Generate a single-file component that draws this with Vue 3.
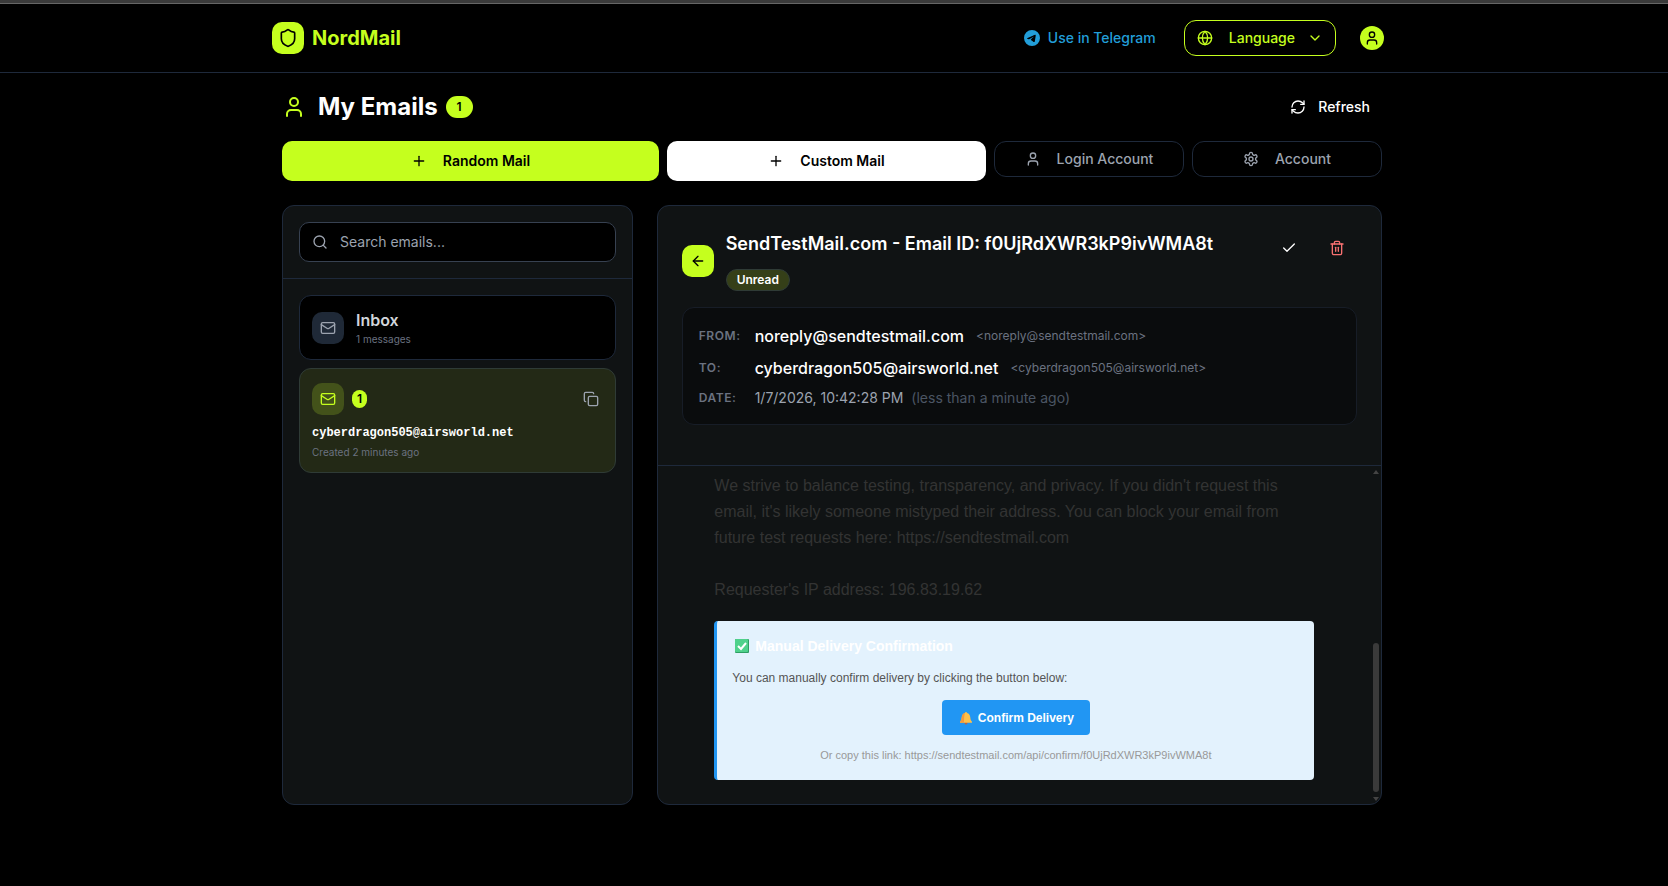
<template>
  <div class="page">
    <header class="topbar">
      <div class="topbar_inner">
        <a href="#" class="brand">
          <span class="brand_mark"><Icon name="shield" :size="20" /></span>
          <span class="brand_name">NordMail</span>
        </a>
        <nav class="topbar_nav">
          <a href="#" class="telegram">
            <svg width="16" height="16" viewBox="0 0 24 24" fill="currentColor" aria-hidden="true">
              <path d="M11.944 0A12 12 0 0 0 0 12a12 12 0 0 0 12 12 12 12 0 0 0 12-12A12 12 0 0 0 12 0a12 12 0 0 0-.056 0zm4.962 7.224c.1-.002.321.023.465.14a.506.506 0 0 1 .171.325c.016.093.036.306.02.472-.18 1.898-.962 6.502-1.36 8.627-.168.9-.499 1.201-.82 1.23-.696.065-1.225-.46-1.9-.902-1.056-.693-1.653-1.124-2.678-1.8-1.185-.78-.417-1.21.258-1.91.177-.184 3.247-2.977 3.307-3.23.007-.032.014-.15-.056-.212s-.174-.041-.249-.024c-.106.024-1.793 1.14-5.061 3.345-.48.33-.913.49-1.302.48-.428-.008-1.252-.241-1.865-.44-.752-.245-1.349-.374-1.297-.789.027-.216.325-.437.893-.663 3.498-1.524 5.83-2.529 6.998-3.014 3.332-1.386 4.025-1.627 4.476-1.635z" />
            </svg>
            Use in Telegram
          </a>
          <button type="button" class="language">
            <Icon name="globe" />
            <span class="language_label">Language</span>
            <Icon name="chevron" />
          </button>
          <button type="button" class="avatar_btn" aria-label="Profile">
            <span class="avatar"><Icon name="user" /></span>
          </button>
        </nav>
      </div>
    </header>

    <main class="content">
      <div class="title_row">
        <Icon name="user" :size="24" class="title_icon" />
        <h1>My Emails</h1>
        <span class="count">{{ accounts.length }}</span>
        <button type="button" class="refresh"><Icon name="refresh" />Refresh</button>
      </div>

      <div class="actions">
        <button
          v-for="action in actions"
          :key="action.label"
          type="button"
          class="action"
          :class="action.kind"
        >
          <Icon :name="action.icon" />{{ action.label }}
        </button>
      </div>

      <div class="panels">
        <section class="panel sidebar">
          <div class="search_wrapper">
            <label class="search">
              <Icon name="search" />
              <input v-model="query" type="text" placeholder="Search emails..." aria-label="Search emails">
            </label>
          </div>
          <div class="mailboxes">
            <a href="#" class="box inbox">
              <span class="box_icon"><Icon name="mail" /></span>
              <span class="inbox_text">
                <span class="inbox_title">Inbox</span>
                <span class="small">{{ messageCount }} messages</span>
              </span>
            </a>
            <div v-for="account in accounts" :key="account.address" class="box account">
              <div class="account_top">
                <span class="box_icon"><Icon name="mail" /></span>
                <span class="unread_count">{{ account.unread }}</span>
                <button type="button" class="copy" aria-label="Copy address"><Icon name="copy" /></button>
              </div>
              <div class="address">{{ account.address }}</div>
              <div class="small">{{ account.created }}</div>
            </div>
          </div>
        </section>

        <section class="panel reader">
          <div class="reader_head">
            <div class="subject_row">
              <button type="button" class="back" aria-label="Back"><Icon name="arrow" /></button>
              <div class="subject">
                <h2>{{ mail.subject }}</h2>
                <span class="status">Unread</span>
              </div>
              <div class="tools">
                <button type="button" class="tool" aria-label="Mark as read"><Icon name="check" /></button>
                <button type="button" class="tool danger" aria-label="Delete"><Icon name="trash" /></button>
              </div>
            </div>
            <dl class="meta">
              <div class="meta_row">
                <dt>From:</dt>
                <dd>{{ mail.from }}<span class="raw">&lt;{{ mail.from }}&gt;</span></dd>
              </div>
              <div class="meta_row">
                <dt>To:</dt>
                <dd>{{ mail.to }}<span class="raw">&lt;{{ mail.to }}&gt;</span></dd>
              </div>
              <div class="meta_row">
                <dt>Date:</dt>
                <dd class="date">{{ mail.date }}<span class="ago">({{ mail.ago }})</span></dd>
              </div>
            </dl>
          </div>

          <div class="reader_body">
            <div class="scroll_area">
              <article class="letter">
                <p class="letter_text">We strive to balance testing, transparency, and privacy. If you didn't request this email, it's likely someone mistyped their address. You can block your email from future test requests here: https://sendtestmail.com<br><br>Requester's IP address: 196.83.19.62</p>
                <div class="confirm">
                  <h3>
                    <svg width="20" height="16" viewBox="0 0 20 16" aria-hidden="true">
                      <rect x="3" y="1" width="14" height="14" rx="1" fill="#2f9e63" />
                      <rect x="3" y="1" width="13" height="13" rx="1" fill="#4fd18b" />
                      <path d="M6 8l3 3 5-6" fill="none" stroke="#fff" stroke-width="2" />
                    </svg>
                    Manual Delivery Confirmation
                  </h3>
                  <p>You can manually confirm delivery by clicking the button below:</p>
                  <button type="button" class="confirm_btn">
                    <svg width="16" height="14" viewBox="0 0 16 14" aria-hidden="true">
                      <circle cx="8" cy="12" r="1.5" fill="#b5634a" />
                      <path d="M8 1a1 1 0 0 1 1 1c2 .5 3 2 3.300 4.500.2 2 .5 3 1.700 4.200v1H2v-1c1.200-1.200 1.500-2.200 1.700-4.200C4 4 5 2.500 7 2a1 1 0 0 1 1-1z" fill="#ffc04a" />
                      <path d="M7 2C5 2.500 4 4 3.700 6.500c-.2 2-.5 3-1.700 4.200v1h4C6 8 6 5 7 2z" fill="#f59a3c" />
                    </svg>
                    Confirm Delivery
                  </button>
                  <p class="copy_link">Or copy this link: https://sendtestmail.com/api/confirm/f0UjRdXWR3kP9ivWMA8t</p>
                </div>
              </article>
            </div>
            <div class="scrollbar" aria-hidden="true">
              <span class="scroll_up"></span>
              <span class="scroll_thumb"></span>
              <span class="scroll_down"></span>
            </div>
          </div>
        </section>
      </div>
    </main>
  </div>
</template>

<script setup>
import { ref, computed, h } from 'vue';

const icons = {
  shield: ['M20 13c0 5-3.5 7.5-7.66 8.95a1 1 0 0 1-.67-.01C7.5 20.5 4 18 4 13V6a1 1 0 0 1 1-1c2 0 4.5-1.2 6.24-2.72a1.17 1.17 0 0 1 1.52 0C14.51 3.81 17 5 19 5a1 1 0 0 1 1 1z'],
  globe: ['M22 12a10 10 0 1 1-20 0 10 10 0 0 1 20 0z', 'M12 2a14.5 14.5 0 0 0 0 20 14.5 14.5 0 0 0 0-20', 'M2 12h20'],
  chevron: ['m6 9 6 6 6-6'],
  user: ['M19 21v-2a4 4 0 0 0-4-4H9a4 4 0 0 0-4 4v2', 'M16 7a4 4 0 1 1-8 0 4 4 0 0 1 8 0z'],
  refresh: ['M3 12a9 9 0 0 1 9-9 9.75 9.75 0 0 1 6.74 2.74L21 8', 'M21 3v5h-5', 'M21 12a9 9 0 0 1-9 9 9.75 9.75 0 0 1-6.74-2.74L3 16', 'M8 16H3v5'],
  plus: ['M5 12h14', 'M12 5v14'],
  settings: [
    'M12.22 2h-.44a2 2 0 0 0-2 2v.18a2 2 0 0 1-1 1.73l-.43.25a2 2 0 0 1-2 0l-.15-.08a2 2 0 0 0-2.73.73l-.22.38a2 2 0 0 0 .73 2.73l.15.1a2 2 0 0 1 1 1.72v.51a2 2 0 0 1-1 1.74l-.15.09a2 2 0 0 0-.73 2.73l.22.38a2 2 0 0 0 2.73.73l.15-.08a2 2 0 0 1 2 0l.43.25a2 2 0 0 1 1 1.73V20a2 2 0 0 0 2 2h.44a2 2 0 0 0 2-2v-.18a2 2 0 0 1 1-1.73l.43-.25a2 2 0 0 1 2 0l.15.08a2 2 0 0 0 2.73-.73l.22-.39a2 2 0 0 0-.73-2.73l-.15-.08a2 2 0 0 1-1-1.74v-.5a2 2 0 0 1 1-1.74l.15-.09a2 2 0 0 0 .73-2.73l-.22-.38a2 2 0 0 0-2.73-.73l-.15.08a2 2 0 0 1-2 0l-.43-.25a2 2 0 0 1-1-1.73V4a2 2 0 0 0-2-2z',
    'M15 12a3 3 0 1 1-6 0 3 3 0 0 1 6 0z'
  ],
  search: ['M19 11a8 8 0 1 1-16 0 8 8 0 0 1 16 0z', 'm21 21-4.3-4.3'],
  mail: ['M4 4h16a2 2 0 0 1 2 2v12a2 2 0 0 1-2 2H4a2 2 0 0 1-2-2V6a2 2 0 0 1 2-2z', 'm22 7-8.97 5.7a1.94 1.94 0 0 1-2.06 0L2 7'],
  copy: ['M10 8h10a2 2 0 0 1 2 2v10a2 2 0 0 1-2 2H10a2 2 0 0 1-2-2V10a2 2 0 0 1 2-2z', 'M4 16c-1.1 0-2-.9-2-2V4c0-1.1.9-2 2-2h10c1.1 0 2 .9 2 2'],
  arrow: ['m12 19-7-7 7-7', 'M19 12H5'],
  check: ['M20 6 9 17l-5-5'],
  trash: ['M3 6h18', 'M19 6v14c0 1-1 2-2 2H7c-1 0-2-1-2-2V6', 'M8 6V4c0-1 1-2 2-2h4c1 0 2 1 2 2v2', 'M10 11v6', 'M14 11v6']
};

// Small line icon, takes the text color of its parent
const Icon = ({ name, size = 16 }) => h('svg', {
  width: size,
  height: size,
  viewBox: '0 0 24 24',
  fill: 'none',
  stroke: 'currentColor',
  'stroke-width': 2,
  'stroke-linecap': 'round',
  'stroke-linejoin': 'round',
  'aria-hidden': 'true'
}, icons[name].map((d) => h('path', { d })));
Icon.props = ['name', 'size'];

const query = ref('');

const actions = [
  { label: 'Random Mail', icon: 'plus', kind: 'primary' },
  { label: 'Custom Mail', icon: 'plus', kind: 'light' },
  { label: 'Login Account', icon: 'user', kind: 'outline' },
  { label: 'Account', icon: 'settings', kind: 'outline' }
];

const accounts = ref([
  { address: 'cyberdragon505@airsworld.net', unread: 1, created: 'Created 2 minutes ago' }
]);

const messageCount = computed(() => accounts.value.reduce((sum, a) => sum + a.unread, 0));

const mail = {
  subject: 'SendTestMail.com - Email ID: f0UjRdXWR3kP9ivWMA8t',
  from: 'noreply@sendtestmail.com',
  to: 'cyberdragon505@airsworld.net',
  date: '1/7/2026, 10:42:28 PM',
  ago: 'less than a minute ago'
};
</script>

<style>
body {
  margin: 0;
  background: #000;
}
</style>

<style scoped>
.page {
  --lime: #c5ff1e;
  --line: #1e293b;
  min-height: 100vh;
  box-sizing: border-box;
  border-top: 3px solid #3a3a3a;
  background: #000;
  color: #fff;
  font-family: Inter, "Liberation Sans", sans-serif;
  font-size: 14px;
  line-height: 20px;
}
.page * {
  box-sizing: border-box;
}
svg {
  flex-shrink: 0;
}
a {
  color: inherit;
  text-decoration: none;
}
button {
  display: flex;
  align-items: center;
  justify-content: center;
  padding: 0;
  border: none;
  background: none;
  color: inherit;
  font: inherit;
  font-weight: 500;
  cursor: pointer;
}
h1, h2, h3, p, dl, dd {
  margin: 0;
}

/* Top bar */
.topbar {
  padding-right: 4px;
  border-top: 1px solid #666;
  border-bottom: 1px solid var(--line);
}
.topbar_inner {
  display: flex;
  align-items: center;
  justify-content: space-between;
  max-width: 1120px;
  height: 68px;
  margin: 0 auto;
}
.brand {
  display: flex;
  align-items: center;
  gap: 8px;
}
.brand_mark {
  display: flex;
  align-items: center;
  justify-content: center;
  width: 32px;
  height: 32px;
  border-radius: 10px;
  background: var(--lime);
  color: #000;
}
.brand_name {
  color: var(--lime);
  font-size: 20px;
  font-weight: 700;
  line-height: 28px;
}
.topbar_nav {
  display: flex;
  align-items: center;
  gap: 16px;
}
.telegram {
  display: flex;
  align-items: center;
  gap: 8px;
  padding: 0 12px;
  color: #229ed9;
  font-weight: 500;
}
.language {
  height: 36px;
  padding: 0 12px;
  border: 1px solid var(--lime);
  border-radius: 12px;
  color: var(--lime);
}
.language_label {
  margin: 0 12px 0 16px;
}
.avatar_btn {
  width: 40px;
  height: 36px;
}
.avatar {
  display: flex;
  align-items: center;
  justify-content: center;
  width: 24px;
  height: 24px;
  border-radius: 50%;
  background: var(--lime);
  color: #000;
}

/* Page title and buttons */
.content {
  max-width: 1104px;
  margin: 0 auto;
  padding: 16px 4px 0 0;
}
.title_row {
  display: flex;
  align-items: center;
  height: 36px;
}
.title_icon {
  margin-right: 12px;
  color: var(--lime);
}
h1 {
  font-size: 24px;
  font-weight: 700;
  line-height: 32px;
}
.count {
  margin-left: 8px;
  padding: 3px 11px;
  border-radius: 11px;
  background: var(--lime);
  color: #000;
  font-size: 12px;
  font-weight: 600;
  line-height: 16px;
}
.refresh {
  gap: 12px;
  height: 36px;
  margin-left: auto;
  padding: 0 12px;
}
.actions {
  display: grid;
  grid-template-columns: 377fr 319fr 190fr 190fr;
  gap: 8px;
  align-items: start;
  margin-top: 16px;
}
.action {
  gap: 16px;
  height: 40px;
  border-radius: 10px;
}
.primary {
  background: var(--lime);
  color: #000;
  font-weight: 600;
}
.light {
  background: #fff;
  color: #000;
  font-weight: 600;
}
.outline {
  height: 36px;
  border: 1px solid var(--line);
  border-radius: 12px;
  color: #9ca3af;
}

/* Panels */
.panels {
  display: grid;
  grid-template-columns: repeat(3, minmax(0, 1fr));
  gap: 24px;
  height: calc(100vh - 286px);
  min-height: 560px;
  margin-top: 24px;
}
.panel {
  display: flex;
  flex-direction: column;
  overflow: hidden;
  border: 1px solid var(--line);
  border-radius: 12px;
  background: #101314;
}
.search_wrapper {
  padding: 16px;
  border-bottom: 1px solid var(--line);
}
.search {
  display: flex;
  align-items: center;
  gap: 12px;
  height: 40px;
  padding: 0 12px;
  border: 1px solid #374151;
  border-radius: 10px;
  background: #000;
  color: #9ca3af;
}
.search input {
  flex: 1;
  min-width: 0;
  padding: 0;
  border: none;
  outline: none;
  background: none;
  color: #fff;
  font: inherit;
}
.search input::placeholder {
  color: #9ca3af;
}
.mailboxes {
  display: flex;
  flex-direction: column;
  gap: 8px;
  padding: 16px;
}
.box {
  padding: 12px;
  border: 1px solid var(--line);
  border-radius: 12px;
}
.box_icon {
  display: flex;
  align-items: center;
  justify-content: center;
  width: 32px;
  height: 32px;
  border-radius: 10px;
  background: #1f2937;
  color: #9ca3af;
}
.inbox {
  display: flex;
  align-items: center;
  gap: 12px;
  background: #000;
}
.inbox_text {
  display: flex;
  flex-direction: column;
}
.inbox_title {
  color: #d1d5db;
  font-size: 16px;
  font-weight: 600;
  line-height: 24px;
}
.small {
  color: #6b7280;
  font-size: 10px;
  line-height: 15px;
}
.account {
  border-color: #2f3b36;
  background: #232916;
}
.account .box_icon {
  background: #43521a;
  color: var(--lime);
}
.account_top {
  display: flex;
  align-items: center;
  gap: 8px;
  height: 36px;
}
.unread_count {
  padding: 1px 5px;
  border-radius: 9px;
  background: var(--lime);
  color: #000;
  font-size: 12px;
  font-weight: 600;
  line-height: 16px;
}
.copy {
  width: 24px;
  height: 36px;
  margin-left: auto;
  color: #9ca3af;
}
.address {
  margin: 8px 0 4px;
  font-family: "Liberation Mono", monospace;
  font-size: 12px;
  font-weight: 700;
  line-height: 16px;
}

/* Mail reader */
.reader {
  grid-column: span 2;
}
.reader_head {
  padding: 24px 24px 40px;
  border-bottom: 1px solid var(--line);
}
.subject_row {
  display: flex;
  align-items: center;
  gap: 12px;
}
.back {
  width: 32px;
  height: 32px;
  border-radius: 10px;
  background: var(--lime);
  color: #000;
}
.subject {
  display: flex;
  flex: 1;
  flex-direction: column;
  align-items: flex-start;
  gap: 12px;
}
h2 {
  font-size: 18px;
  font-weight: 600;
  line-height: 27px;
}
.status {
  padding: 2px 10px;
  border: 1px solid #2f3b36;
  border-radius: 11px;
  background: #353f18;
  font-size: 12px;
  font-weight: 600;
  line-height: 16px;
}
.tools {
  display: flex;
  align-self: flex-start;
  gap: 8px;
}
.tool {
  width: 40px;
  height: 36px;
}
.danger {
  color: #f87171;
}
.meta {
  display: flex;
  flex-direction: column;
  gap: 8px;
  margin-top: 16px;
  padding: 16px;
  border: 1px solid #171d27;
  border-radius: 12px;
  background: #0a0c0d;
}
.meta_row {
  display: flex;
  align-items: center;
  gap: 8px;
}
dt {
  width: 48px;
  color: #6b7280;
  font-size: 12px;
  font-weight: 600;
  line-height: 16px;
  letter-spacing: 0.05em;
  text-transform: uppercase;
}
dd {
  display: flex;
  align-items: center;
  gap: 12px;
  font-size: 16px;
  font-weight: 500;
  line-height: 24px;
}
.raw {
  color: #6b7280;
  font-size: 12px;
  font-weight: 400;
}
.date {
  gap: 8px;
  color: #9ca3af;
  font-size: 14px;
  font-weight: 400;
  line-height: 20px;
}
.ago {
  color: #4b5563;
}

/* Letter */
.reader_body {
  display: flex;
  flex: 1;
  min-height: 0;
}
.scroll_area {
  flex: 1;
  padding: 7px 24px 24px;
  overflow-y: auto;
  scrollbar-width: none;
}
.letter {
  max-width: 600px;
  margin: 0 auto;
  font-family: "Liberation Sans", Arial, sans-serif;
}
.letter_text {
  color: #333;
  font-size: 16px;
  line-height: 26px;
}
.confirm {
  margin-top: 18px;
  padding: 15px;
  border-left: 3px solid #2196f3;
  border-radius: 4px;
  background: #e3f2fd;
  color: #555;
  font-size: 12px;
}
h3 {
  display: flex;
  align-items: center;
  gap: 3px;
  margin-bottom: 12px;
  color: #fff;
  font-size: 14px;
  line-height: 20px;
}
.confirm_btn {
  gap: 4px;
  height: 35px;
  margin: 12px auto 10px;
  padding: 0 16px;
  border-radius: 4px;
  background: #2196f3;
  color: #fff;
  font-weight: 700;
}
.copy_link {
  color: #999;
  font-size: 11px;
  text-align: center;
}
.scrollbar {
  display: flex;
  flex-direction: column;
  align-items: center;
  width: 10px;
  padding: 4px 0 3px;
}
.scroll_up,
.scroll_down {
  border: 3px solid transparent;
  border-top: none;
  border-bottom: 4px solid #444;
}
.scroll_down {
  border-top: 4px solid #444;
  border-bottom: none;
}
.scroll_thumb {
  width: 6px;
  height: 149px;
  margin: auto 0 5px;
  border-radius: 3px;
  background: #3a3a3a;
}
</style>
